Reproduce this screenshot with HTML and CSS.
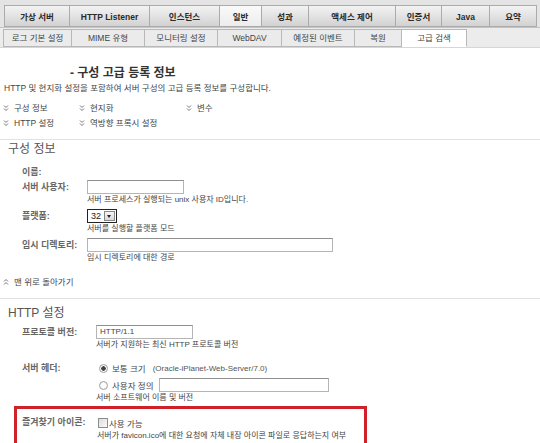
FILE: index.html
```html
<!DOCTYPE html>
<html lang="ko">
<head>
    <meta charset="UTF-8">
    <title>구성 고급 등록 정보</title>
    <link rel="stylesheet" href="styles.css">
</head>
<body>
    <div class="tabs-top">
        <a class="tab">가상 서버</a>
        <a class="tab">HTTP Listener</a>
        <a class="tab">인스턴스</a>
        <a class="tab active">일반</a>
        <a class="tab">성과</a>
        <a class="tab">액세스 제어</a>
        <a class="tab">인증서</a>
        <a class="tab">Java</a>
        <a class="tab">요약</a>
    </div>
    <div class="tabs-sub">
        <a class="subtab">로그 기본 설정</a>
        <a class="subtab">MIME 유형</a>
        <a class="subtab">모니터링 설정</a>
        <a class="subtab">WebDAV</a>
        <a class="subtab">예정된 이벤트</a>
        <a class="subtab">복원</a>
        <a class="subtab active">고급 검색</a>
    </div>

    <div class="page">
        <h1 class="title">- 구성 고급 등록 정보</h1>
        <p class="desc">HTTP 및 현지화 설정을 포함하여 서버 구성의 고급 등록 정보를 구성합니다.</p>

        <div class="jump">
            <a class="jump-link"><svg class="chev" viewBox="0 0 6 8"><path d="M1 1.5l2 2 2-2M1 4.5l2 2 2-2"/></svg>구성 정보</a>
            <a class="jump-link"><svg class="chev" viewBox="0 0 6 8"><path d="M1 1.5l2 2 2-2M1 4.5l2 2 2-2"/></svg>현지화</a>
            <a class="jump-link"><svg class="chev" viewBox="0 0 6 8"><path d="M1 1.5l2 2 2-2M1 4.5l2 2 2-2"/></svg>변수</a>
            <a class="jump-link"><svg class="chev" viewBox="0 0 6 8"><path d="M1 1.5l2 2 2-2M1 4.5l2 2 2-2"/></svg>HTTP 설정</a>
            <a class="jump-link"><svg class="chev" viewBox="0 0 6 8"><path d="M1 1.5l2 2 2-2M1 4.5l2 2 2-2"/></svg>역방향 프록시 설정</a>
        </div>

        <hr class="sep">

        <section class="section">
            <h2>구성 정보</h2>
            <div class="form form-narrow">
                <div class="field">
                    <label>이름:</label>
                    <div></div>
                </div>
                <div class="field field-tight">
                    <label>서버 사용자:</label>
                    <div>
                        <span class="input w97"></span>
                        <div class="help">서버 프로세스가 실행되는 unix 사용자 ID입니다.</div>
                    </div>
                </div>
                <div class="field">
                    <label>플랫폼:</label>
                    <div>
                        <span class="select">32<span class="arrow"></span></span>
                        <div class="help">서버를 실행할 플랫폼 모드</div>
                    </div>
                </div>
                <div class="field">
                    <label>임시 디렉토리:</label>
                    <div>
                        <span class="input w246"></span>
                        <div class="help">임시 디렉토리에 대한 경로</div>
                    </div>
                </div>
            </div>
        </section>

        <a class="top-link"><svg class="chev" viewBox="0 0 6 8"><path d="M1 3.5l2-2 2 2M1 6.5l2-2 2 2"/></svg>맨 위로 돌아가기</a>

        <hr class="sep sep-2">

        <section class="section section-http">
            <h2>HTTP 설정</h2>
            <div class="form form-wide">
                <div class="field">
                    <label>프로토콜 버전:</label>
                    <div>
                        <span class="input w97">HTTP/1.1</span>
                        <div class="help">서버가 지원하는 최신 HTTP 프로토콜 버전</div>
                    </div>
                </div>
                <div class="field field-header">
                    <label>서버 헤더:</label>
                    <div>
                        <div class="choice"><span class="radio on"></span>보통 크기<span class="muted">(Oracle-iPlanet-Web-Server/7.0)</span></div>
                        <div class="choice"><span class="radio"></span>사용자 정의<span class="input w170"></span></div>
                        <div class="help">서버 소프트웨어 이름 및 버전</div>
                    </div>
                </div>
                <div class="field highlight">
                    <label>즐겨찾기 아이콘:</label>
                    <div>
                        <div class="choice"><span class="checkbox"></span>사용 가능</div>
                        <div class="help">서버가 favicon.ico에 대한 요청에 자체 내장 아이콘 파일로 응답하는지 여부</div>
                    </div>
                </div>
            </div>
        </section>
    </div>
</body>
</html>
```

FILE: styles.css
```css
* {
    box-sizing: border-box;
}

body {
    margin: 0;
    font-family: "Liberation Sans", "Noto Sans CJK KR", sans-serif;
    color: #333;
    background: #fff;
    overflow: hidden;
}

/* top tabs */
.tabs-top {
    display: flex;
    height: 28px;
    padding: 5px 0 0 4px;
    background: #e4e4e4;
    border-bottom: 1px solid #c4c4c4;
}

.tab {
    height: 22px;
    line-height: 22px;
    text-align: center;
    font-size: 8.5px;
    font-weight: bold;
    color: #2a2a2a;
    background: linear-gradient(#f3f3f3, #d2d2d2);
    border: 1px solid #ababab;
    border-left: none;
}

.tab:first-child { border-left: 1px solid #ababab; width: 66px; }
.tab:nth-child(2) { width: 80px; }
.tab:nth-child(3) { width: 70px; }
.tab:nth-child(4) { width: 42px; }
.tab:nth-child(5) { width: 47px; }
.tab:nth-child(6) { width: 87px; }
.tab:nth-child(7) { width: 46px; }
.tab:nth-child(8) { width: 48px; }
.tab:nth-child(9) { width: 47px; }

.tab.active {
    background: linear-gradient(#fafafa, #ececec);
}

/* sub tabs */
.tabs-sub {
    display: flex;
    height: 20px;
    padding: 1px 0 0 3px;
    background: #ececec;
    border-bottom: 1px solid #d6d6d6;
}

.subtab {
    height: 18px;
    line-height: 16px;
    text-align: center;
    font-size: 8.5px;
    color: #444;
    background: #ebebeb;
    border: 1px solid #b8b8b8;
    border-left: none;
}

.subtab:first-child { border-left: 1px solid #b8b8b8; width: 69px; }
.subtab:nth-child(2) { width: 73px; }
.subtab:nth-child(3) { width: 73px; }
.subtab:nth-child(4) { width: 64px; }
.subtab:nth-child(5) { width: 73px; }
.subtab:nth-child(6) { width: 47px; }
.subtab:nth-child(7) { width: 65px; }

.subtab.active {
    background: #fff;
    border-bottom-color: #fff;
}

/* page */
.page {
    padding-top: 17px;
}

.title {
    margin: 0;
    padding-left: 70px;
    font-size: 12px;
    line-height: 16px;
    font-weight: bold;
    color: #333;
}

.desc {
    margin: 1px 0 0;
    padding-left: 4px;
    font-size: 8.5px;
    line-height: 12px;
    color: #444;
}

.jump {
    display: grid;
    grid-template-columns: 76px 107px auto;
    row-gap: 3px;
    margin-top: 8px;
    padding-left: 3px;
}

.jump-link,
.top-link {
    display: flex;
    align-items: center;
    gap: 5px;
    font-size: 8.5px;
    line-height: 12px;
    color: #444;
}

.chev {
    width: 6px;
    height: 8px;
    fill: none;
    stroke: #777;
    stroke-width: 1;
}

.sep {
    margin: 10px 0 0;
    border: none;
    border-top: 1px solid #e2e2e2;
}

.section h2 {
    margin: 1px 0 0;
    padding-left: 8px;
    font-size: 12px;
    line-height: 16px;
    font-weight: normal;
    color: #555;
}

.section-http h2 {
    margin-top: 6px;
}

.form {
    padding-left: 22px;
    margin-top: 8px;
}

.form-wide {
    margin-top: 4px;
}

.field {
    display: grid;
    grid-template-columns: 65px 1fr;
    margin-top: 3px;
}

.field:first-child {
    margin-top: 0;
}

.field-tight {
    margin-top: 1px;
}

.form-wide .field {
    grid-template-columns: 74px 1fr;
}

.field label {
    font-size: 9px;
    line-height: 14px;
    font-weight: bold;
    color: #666;
}

.input {
    display: block;
    height: 14px;
    padding: 0 3px;
    border: 1px solid #b5b5b5;
    border-top-color: #8f8f8f;
    font-size: 8px;
    line-height: 12px;
    color: #444;
    background: #fff;
}

.w97 { width: 97px; }
.w246 { width: 246px; }
.w170 { width: 170px; }

.select {
    display: flex;
    align-items: center;
    width: 30px;
    height: 14px;
    padding-left: 3px;
    border: 1px solid #222;
    font-size: 9px;
    line-height: 12px;
    color: #222;
}

.arrow {
    position: relative;
    width: 11px;
    height: 10px;
    margin-left: auto;
    margin-right: 1px;
    border: 1px solid #888;
    background: linear-gradient(#f6f6f6, #d8d8d8);
}

.arrow::after {
    content: "";
    position: absolute;
    left: 2px;
    top: 3px;
    border-left: 2.5px solid transparent;
    border-right: 2.5px solid transparent;
    border-top: 3px solid #222;
}

.help {
    font-size: 8px;
    line-height: 12px;
    color: #444;
}

.top-link {
    margin-top: 12px;
    padding-left: 3px;
}

.sep-2 {
    margin-top: 10px;
}

.form-wide .field-header {
    margin-top: 10px;
}

.choice {
    display: flex;
    align-items: center;
    height: 14px;
    font-size: 8.5px;
    color: #444;
}

.choice + .choice {
    margin-top: 3px;
}

.radio {
    width: 9px;
    height: 9px;
    margin: 0 4px 0 3px;
    border: 1px solid #a0a0a0;
    border-radius: 50%;
    background: radial-gradient(circle, #fff 40%, #e2e2e2 100%);
}

.radio.on {
    background: radial-gradient(circle, #444 0 2px, #fff 2.5px 3px, #dcdcdc 100%);
}

.muted {
    margin-left: 7px;
    color: #555;
    font-size: 8px;
}

.choice .input {
    margin-left: 6px;
}

.checkbox {
    width: 10px;
    height: 10px;
    margin: 0 1px 0 1px;
    border: 1px solid #8d8d8d;
    background: linear-gradient(135deg, #dcdcdc, #fbfbfb);
}

.form-wide .highlight {
    width: 353px;
    margin: 2px 0 0 -8px;
    padding: 6px 0 4px 5px;
    border: 3px solid #d0202a;
    grid-template-columns: 75px 1fr;
}

.highlight .choice {
    margin-top: 1px;
}
```
